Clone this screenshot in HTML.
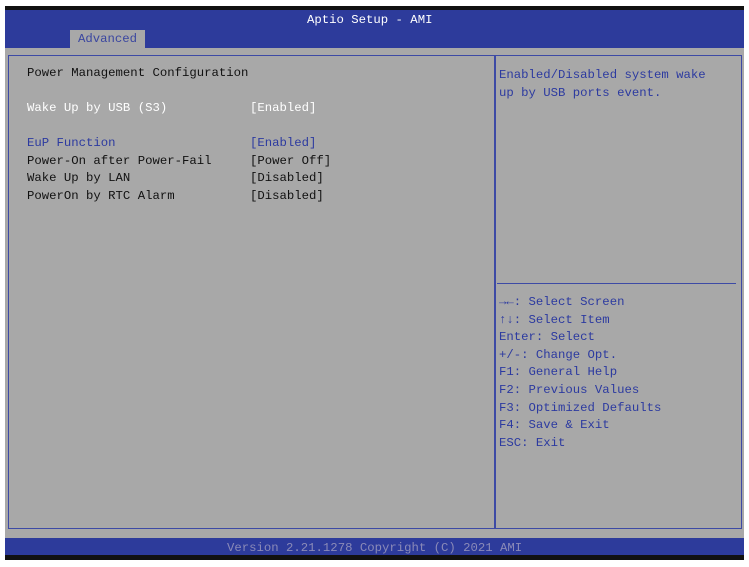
<!DOCTYPE html><html><head><style>
body{margin:0;width:749px;height:567px;background:#fff;position:relative;overflow:hidden;font-family:"Liberation Mono",monospace;font-size:12.3px}
.t{position:absolute;white-space:pre;line-height:14px}
#top{position:absolute;left:5px;top:6px;width:739px;height:4px;background:#111}
#hdr{position:absolute;left:5px;top:10px;width:739px;height:39px;background:#2d3b9b}
#body{position:absolute;left:5px;top:48px;width:739px;height:490px;background:#a8a8a8}
#box{position:absolute;left:8px;top:55px;width:734px;height:474px;border:1px solid #3d4aa5;box-sizing:border-box}
#div{position:absolute;left:494px;top:55px;width:2px;height:474px;background:#3d4aa5}
#hl{position:absolute;left:497px;top:283px;width:239px;height:1px;background:#3d4aa5}
#tab{position:absolute;left:70px;top:30px;width:75px;height:18px;background:#a8a8a8}
#ftr{position:absolute;left:5px;top:538px;width:739px;height:17px;background:#2d3b9b}
#bot{position:absolute;left:5px;top:555px;width:739px;height:5px;background:#111}
.b{color:#2c3aa0}.w{color:#fff}.k{color:#111}.g{color:#8a8ab8}
</style></head><body>
<div id="top"></div><div id="hdr"></div><div id="body"></div><div id="tab"></div>
<div id="box"></div><div id="div"></div><div id="hl"></div><div id="ftr"></div><div id="bot"></div>
<div class="t w" style="left:307px;top:13px">Aptio Setup - AMI</div>
<div class="t b" style="left:78px;top:32px;color:#3a46a0">Advanced</div>
<div class="t k" style="left:27px;top:66px">Power Management Configuration</div>
<div class="t w" style="left:27px;top:101px">Wake Up by USB (S3)</div>
<div class="t w" style="left:250px;top:101px">[Enabled]</div>
<div class="t b" style="left:27px;top:136px">EuP Function</div>
<div class="t b" style="left:250px;top:136px">[Enabled]</div>
<div class="t k" style="left:27px;top:153.5px">Power-On after Power-Fail</div>
<div class="t k" style="left:250px;top:153.5px">[Power Off]</div>
<div class="t k" style="left:27px;top:171px">Wake Up by LAN</div>
<div class="t k" style="left:250px;top:171px">[Disabled]</div>
<div class="t k" style="left:27px;top:189px">PowerOn by RTC Alarm</div>
<div class="t k" style="left:250px;top:189px">[Disabled]</div>
<div class="t b" style="left:499px;top:66px;line-height:18px">Enabled/Disabled system wake
up by USB ports event.</div>
<div class="t b" style="left:499px;top:294px;line-height:17.6px">→←: Select Screen
↑↓: Select Item
Enter: Select
+/-: Change Opt.
F1: General Help
F2: Previous Values
F3: Optimized Defaults
F4: Save &amp; Exit
ESC: Exit</div>
<div class="t g" style="left:227px;top:541px">Version 2.21.1278 Copyright (C) 2021 AMI</div>
</body></html>
